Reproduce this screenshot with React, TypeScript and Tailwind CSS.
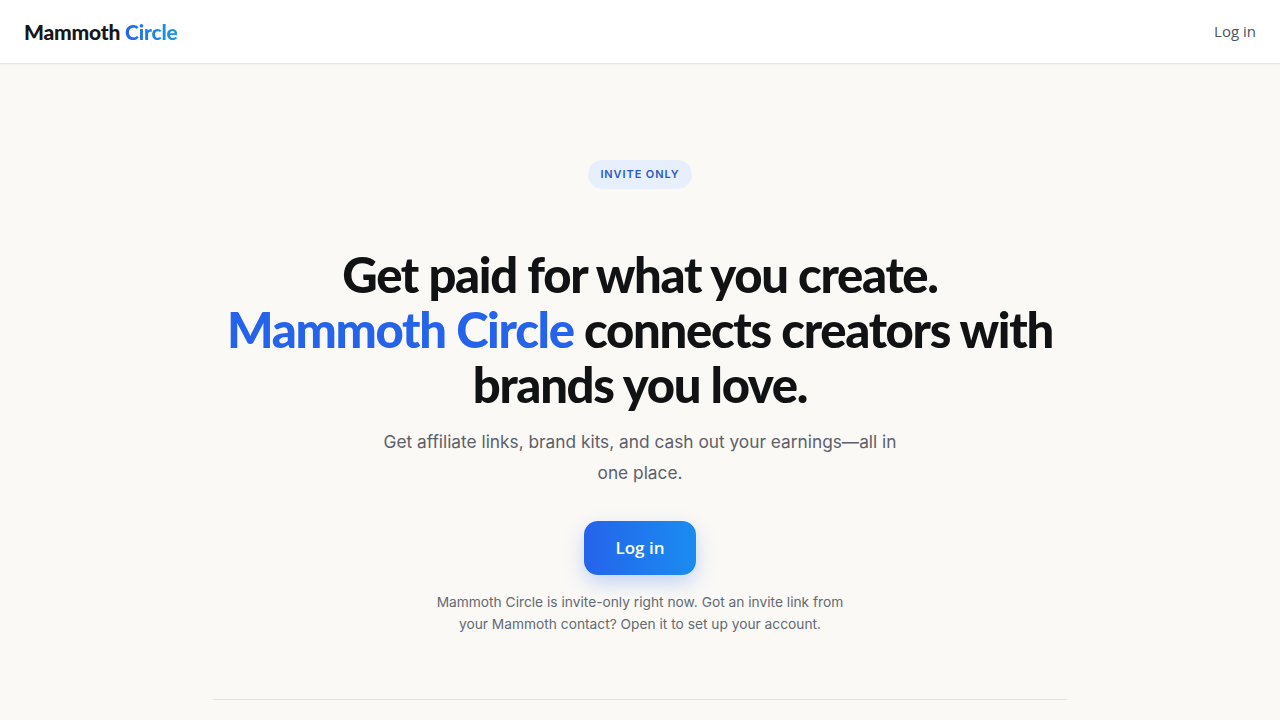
export default function App() {
  return (
    <div className="min-h-screen bg-[#faf9f6] font-['Inter',sans-serif]">
      {/* top bar */}
      <header className="flex h-16 items-center justify-between border-b border-[#e7e5e1] bg-white px-6 shadow-[0_1px_2px_rgba(0,0,0,0.04)]">
        <div className="font-['Lato',sans-serif] text-[21px] font-black tracking-[-0.2px] text-[#16171a]">
          Mammoth{" "}
          <span className="bg-gradient-to-r from-[#2563eb] to-[#1e9be0] bg-clip-text text-transparent">
            Circle
          </span>
        </div>
        <a className="font-['Open_Sans',sans-serif] text-[15px] text-[#4b5563]">Log in</a>
      </header>

      {/* hero */}
      <main className="flex flex-col items-center px-6 pt-24 text-center">
        <span className="rounded-full bg-[#e8effc] px-3 py-[6px] text-[11px] font-semibold tracking-[0.9px] text-[#2b5bbf]">
          INVITE ONLY
        </span>

        <h1 className="mt-[58px] font-['Lato',sans-serif] text-[49px] font-black leading-[55px] tracking-[-1.3px] text-[#111214]">
          Get paid for what you create.
          <br />
          <span className="text-[#2563eb]">Mammoth Circle</span> connects creators with
          <br />
          brands you love.
        </h1>

        <p className="mt-[14px] max-w-[530px] text-[17.3px] leading-[31px] text-[#5b606a]">
          Get affiliate links, brand kits, and cash out your earnings—all in one place.
        </p>

        <button className="mt-[33px] h-[54px] w-[112px] rounded-[14px] bg-gradient-to-r from-[#2563eb] to-[#1a8cf0] font-['Open_Sans',sans-serif] text-[17px] font-semibold text-white shadow-[0_8px_20px_rgba(37,99,235,0.25)]">
          Log in
        </button>

        <p className="mt-4 max-w-[420px] text-[13.75px] leading-[22px] text-[#646a73]">
          Mammoth Circle is invite-only right now. Got an invite link from your Mammoth contact? Open it to set up your account.
        </p>

        <div className="mt-16 h-px w-[854px] bg-[#e4e1db]" />
      </main>
    </div>
  );
}
